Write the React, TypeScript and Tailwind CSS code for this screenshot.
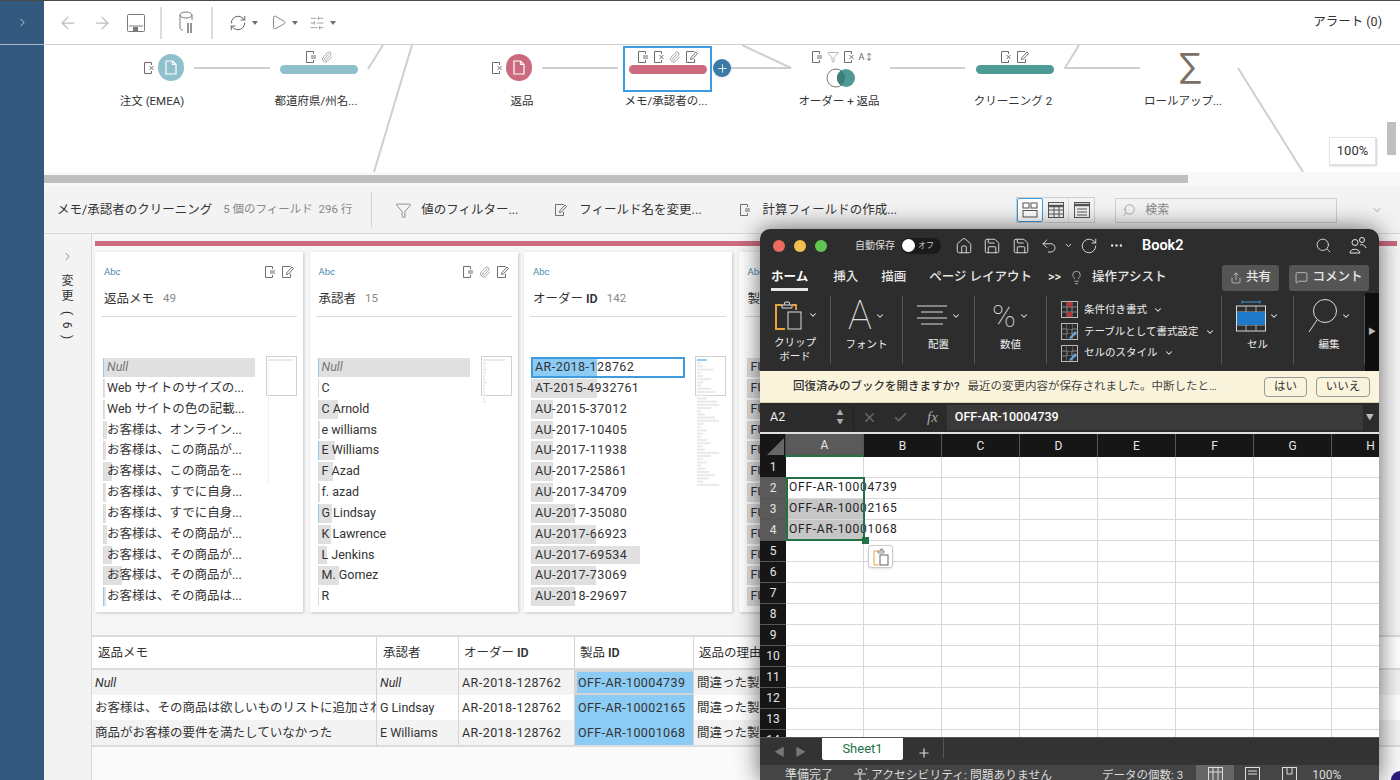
import React from "react";
import { ArrowLeft, ArrowRight, ChevronRight, ChevronDown, Search, House, Save, Undo2, RotateCw, Ellipsis, Lightbulb, Share, MessageSquare, X, Check, Plus, Play, RefreshCw, SlidersHorizontal, Funnel, Paperclip } from "lucide-react";

const S = "#6f6f6f";
function FileLines({ c = S }: { c?: string }) {
  return <svg width="12" height="14" viewBox="0 0 12 14" fill="none" stroke={c} strokeWidth="1"><path d="M8.5 4V1.5H1.5v11h7V10" /><path d="M6 6h5M6 8h5" /></svg>;
}
function FileX({ c = S }: { c?: string }) {
  return <svg width="12" height="14" viewBox="0 0 12 14" fill="none" stroke={c} strokeWidth="1"><path d="M8.5 4V1.5H1.5v11h7V10" /><path d="M6.5 5l4 4M10.5 5l-4 4" /></svg>;
}
function FileEdit({ c = S }: { c?: string }) {
  return <svg width="14" height="14" viewBox="0 0 14 14" fill="none" stroke={c} strokeWidth="1"><path d="M9.5 1.5h-8v11h8V9" /><path d="M5.5 9.5l.5-2 5-5.5 1.5 1.5L7.5 9z" /></svg>;
}
function Clip({ c = S }: { c?: string }) {
  return <Paperclip size={12} color={c} strokeWidth={1.2} />;
}
function Caret() {
  return <span className="mx-[5px] inline-block w-0 h-0 border-x-[3px] border-x-transparent border-t-[4px] border-t-[#707070]" />;
}
function ChevronMini({ w = "#e6e6e6" }: { w?: string }) {
  return <ChevronDown size={10} color={w} strokeWidth={2.5} />;
}

function Node({ x, children, top = 10, icons }: { x: number; children: React.ReactNode; top?: number; icons?: React.ReactNode }) {
  return (
    <div className="absolute top-0 w-[120px] h-[70px] flex flex-col items-center" style={{ left: x - 60 }}>
      <div className="absolute top-[5px] flex items-center gap-[4px] h-[14px]">{icons}</div>
      <div className="absolute left-0 right-0 flex justify-center" style={{ top }}>{children}</div>
    </div>
  );
}
function NodeLabel({ x, t }: { x: number; t: string }) {
  return <div className="absolute top-[48px] w-[120px] text-center text-[11.5px] leading-[16px] text-[#333] whitespace-nowrap" style={{ left: x - 60 }}>{t}</div>;
}
function Circle({ color }: { color: string }) {
  return (
    <div className="w-[26px] h-[27px] rounded-full flex items-center justify-center" style={{ background: color }}>
      <svg width="12" height="15" viewBox="0 0 12 15" fill="none" stroke="#fff" strokeWidth="1.2"><path d="M1 1h6.5L11 4.5V14H1z" /><path d="M7.5 1v3.5H11" /></svg>
    </div>
  );
}
function Pill({ color }: { color: string }) {
  return <div className="w-[78px] h-[9px] rounded-full" style={{ background: color }} />;
}

function Canvas() {
  return (
    <div className="relative h-[127px] bg-white overflow-hidden">
      <svg className="absolute inset-0" width="1356" height="127" fill="none" stroke="#cfcfcf" strokeWidth="2">
        <g transform="translate(-44 -45)">
          <path d="M194 68h76M368 69l15-24M412 45l-38 127M542 68h76M730 68h61L742 45M890 68h75M1079 45l-14 23h75M1238 68l65 104" />
        </g>
      </svg>
      <div className="absolute top-0 left-[-44px] w-[1444px] h-[127px]">
        <div className="absolute left-[143px] top-[16px]"><FileX /></div>
        <Node x={171} top={9}><Circle color="#8fc1cd" /></Node>
        <NodeLabel x={152} t="注文 (EMEA)" />
        <Node x={319} top={20} icons={<><FileLines /><Clip /></>}><Pill color="#8fc1cd" /></Node>
        <NodeLabel x={316} t="都道府県/州名..." />

        <div className="absolute left-[491px] top-[16px]"><FileX /></div>
        <Node x={519} top={9}><Circle color="#cc6a80" /></Node>
        <NodeLabel x={522} t="返品" />

        <div className="absolute left-[623px] top-[1px] w-[89px] h-[46px] border-2 border-[#3f9be0] bg-white" />
        <Node x={668} top={20} icons={<><FileLines /><FileX /><Clip /><FileEdit /></>}><Pill color="#cc6a80" /></Node>
        <NodeLabel x={666} t="メモ/承認者の..." />
        <div className="absolute left-[713px] top-[14px] w-[18px] h-[18px] rounded-full bg-[#3a7ba6] shadow flex items-center justify-center"><Plus size={13} color="#fff" strokeWidth={1.5} /></div>

        <Node x={842} top={23} icons={<><FileLines /><Funnel size={12} color={S} strokeWidth={1} /><FileX /><span className="text-[9px] leading-[12px] text-[#666]">A↕</span></>}>
          <svg width="30" height="20" viewBox="0 0 30 20" className="ml-[-3px]"><circle cx="10" cy="10" r="9" fill="#fff" stroke="#777" /><circle cx="20" cy="10" r="9" fill="#4e9a94" /><path d="M15 2.5a9 9 0 0 1 0 15a9 9 0 0 1 0-15z" fill="#3f7f7a" /></svg>
        </Node>
        <NodeLabel x={839} t="オーダー + 返品" />

        <Node x={1015} top={20} icons={<><FileX /><FileEdit /></>}><Pill color="#4e9a94" /></Node>
        <NodeLabel x={1013} t="クリーニング 2" />

        <div className="absolute left-[1179px] top-[3px] text-[37px] leading-[38px] font-normal text-[#7a7067]">∑</div>
        <NodeLabel x={1183} t="ロールアップ..." />
      </div>
      <div className="absolute right-[24px] top-[92px] w-[47px] h-[28px] bg-white border border-[#e4e4e4] shadow-[1px_1px_2px_rgba(0,0,0,.2)] flex items-center justify-center text-[13px] text-[#333]">100%</div>
      <div className="absolute right-[4px] top-[77px] w-[9px] h-[33px] bg-[#bfbfbf]" />
    </div>
  );
}

type Row = { t: string; b: number; a?: boolean; i?: boolean };
function ValueRow({ r, wide }: { r: Row; wide?: boolean }) {
  return (
    <div className="relative h-[20.85px] flex items-center shrink-0">
      <div className="absolute left-0 top-[1px] bottom-[1px] bg-[#e0e0e0]" style={{ width: r.b }} />
      <div className={"absolute left-0 top-[1px] bottom-[1px] w-[1px] " + (r.a ? "bg-[#8ccbf4]" : "bg-[#d8d8d8]")} />
      <span className={"relative pl-[4px] text-[12.5px] whitespace-nowrap " + (wide ? "tracking-[.45px] " : "") + (r.i ? "italic text-[#777]" : "text-[#333]")}>{r.t}</span>
    </div>
  );
}
function Overview({ bars, dash }: { bars: number[]; dash?: boolean }) {
  return (
    <div className="absolute right-[6px] top-[104px] w-[31px] h-[40px] border border-[#d0d0d0] bg-white/40">
      <svg width="31" height="130" className="absolute left-0 top-0 overflow-visible">
        {bars.map((b, i) => <rect key={i} x="1" y={2 + i * 3.2} width={b} height="2" fill={i === 0 && dash ? "#8ccbf4" : "#e9e9e9"} />)}
      </svg>
    </div>
  );
}
function Card({ name, bold, count, icons, rows, bars, sel, wide }: { name: string; bold?: string; count: string; icons?: React.ReactNode; rows: Row[]; bars: number[]; sel?: boolean; wide?: boolean }) {
  return (
    <div className="relative w-[208px] h-[360px] shrink-0 bg-white shadow-[1px_1px_3px_rgba(0,0,0,.2)] px-[6px]">
      <div className="flex items-center justify-between h-[40px] pl-[3px] pr-[2px]">
        <span className="text-[9.5px] text-[#4a8ab0]">Abc</span>
        <div className="flex items-center gap-[5px]">{icons}</div>
      </div>
      <div className="h-[14px] pl-[3px] flex items-center text-[12.5px] text-[#333] whitespace-nowrap">
        {name}{bold && <b className="ml-[3px] font-semibold">{bold}</b>}<span className="ml-[9px] text-[11.5px] text-[#888]">{count}</span>
      </div>
      <div className="h-[1px] mt-[10px] bg-[#dcdcdc]" />
      <div className={"mt-[40px] pr-[42px] flex flex-col " + (wide ? "pl-[1px]" : "pl-[2px]")}>
        {sel && (
          <div className="relative h-[20.85px] mr-[-1px] border-2 border-[#3f9be0] flex items-center shrink-0">
            <div className="absolute left-0 top-0 bottom-0 w-[64px] bg-[#8ccbf4]" />
            <span className="relative pl-[2px] text-[12.5px] tracking-[.45px] text-[#333]">AR-2018-128762</span>
          </div>
        )}
        {rows.map((r, i) => <ValueRow key={i} r={r} wide={wide} />)}
      </div>
      <Overview bars={bars} dash={sel} />
    </div>
  );
}

const c1: Row[] = [
  { t: "Null", b: 152, a: true, i: true }, { t: "Web サイトのサイズの...", b: 2 }, { t: "Web サイトの色の記載...", b: 2 },
  { t: "お客様は、オンライン...", b: 4 }, { t: "お客様は、この商品が...", b: 3 }, { t: "お客様は、この商品を...", b: 9 },
  { t: "お客様は、すでに自身...", b: 3 }, { t: "お客様は、すでに自身...", b: 3 }, { t: "お客様は、その商品が...", b: 4 },
  { t: "お客様は、その商品が...", b: 9 }, { t: "お客様は、その商品が...", b: 19 }, { t: "お客様は、その商品は...", b: 3, a: true },
];
const c2: Row[] = [
  { t: "Null", b: 152, a: true, i: true }, { t: "C", b: 1 }, { t: "C Arnold", b: 20 }, { t: "e williams", b: 2 },
  { t: "E Williams", b: 17, a: true }, { t: "F Azad", b: 15 }, { t: "f. azad", b: 2 }, { t: "G Lindsay", b: 14, a: true },
  { t: "K Lawrence", b: 13 }, { t: "L Jenkins", b: 9 }, { t: "M. Gomez", b: 21 }, { t: "R", b: 1 },
];
const c3: Row[] = [
  { t: "AT-2015-4932761", b: 66 }, { t: "AU-2015-37012", b: 22 }, { t: "AU-2017-10405", b: 22 }, { t: "AU-2017-11938", b: 22 },
  { t: "AU-2017-25861", b: 22 }, { t: "AU-2017-34709", b: 22 }, { t: "AU-2017-35080", b: 44 }, { t: "AU-2017-66923", b: 65 },
  { t: "AU-2017-69534", b: 109 }, { t: "AU-2017-73069", b: 65 }, { t: "AU-2018-29697", b: 44 },
];
const c4: Row[] = Array.from({ length: 12 }, () => ({ t: "FUR-BO-10000112", b: 30 }));
const b1 = [25, ...Array.from({ length: 38 }, () => 1)];
const b2 = [22, 3, 2, 4, 3, 2, 2, 4, 2, 2, 2, 3, 2, 3];
const b3 = [10, 4, 6, 16, 4, 6, 14, 6, 4, 14, 18, 8, 10, 20, 22, 14, 4, 8, 18, 22, 6, 4, 10, 6, 4, 10, 14, 6, 8, 22, 14, 6, 10, 4, 8, 12, 18, 12, 6, 22];

function Table() {
  const rows = [
    { a: "Null", ai: true, b: "Null", bi: true, p: "OFF-AR-10004739", bg: "bg-[#f3f3f3]" },
    { a: "お客様は、その商品は欲しいものリストに追加されていた", b: "G Lindsay", p: "OFF-AR-10002165", bg: "bg-white" },
    { a: "商品がお客様の要件を満たしていなかった", b: "E Williams", p: "OFF-AR-10001068", bg: "bg-[#f3f3f3]" },
  ];
  const cell = "h-full flex items-center px-[3px] overflow-hidden whitespace-nowrap border-r border-[#d4d4d4] shrink-0 pt-[1px]";
  return (
    <div className="border-t-2 border-[#dcdcdc] text-[12.5px] text-[#333]">
      <div className="flex h-[33px] bg-white border-b-2 border-[#dcdcdc]">
        <div className={cell + " w-[285px] pl-[6px]"}>返品メモ</div>
        <div className={cell + " w-[82px] pl-[6px]"}>承認者</div>
        <div className={cell + " w-[116px] pl-[5px]"}>オーダー<b className="ml-[3px] font-semibold">ID</b></div>
        <div className={cell + " w-[119px] pl-[5px]"}>製品<b className="ml-[3px] font-semibold">ID</b></div>
        <div className="h-full flex items-center px-[5px] pt-[1px] whitespace-nowrap">返品の理由</div>
      </div>
      {rows.map((r, i) => (
        <div key={i} className={"flex h-[25px] " + r.bg}>
          <div className={cell + " w-[285px] " + (r.ai ? "italic" : "")}>{r.a}</div>
          <div className={cell + " w-[82px] pl-[3px] " + (r.bi ? "italic" : "")}>{r.b}</div>
          <div className={cell + " w-[116px] pl-[3px] tracking-[.45px]"}>AR-2018-128762</div>
          <div className={cell + " w-[119px] bg-[#8ccbf4] pl-[3px] tracking-[.4px] " + (i === 0 ? "border-2 border-[#3f8fd8] !pl-[1px]" : "")}>{r.p}</div>
          <div className="h-full flex items-center px-[3px] pt-[1px] whitespace-nowrap">間違った製品</div>
        </div>
      ))}
      <div className="h-[2px] bg-[#dcdcdc]" />
    </div>
  );
}

function RibbonGroup({ w, label, icon, two }: { w: number; label: string; icon: React.ReactNode; two?: string }) {
  return (
    <div className="flex flex-col items-center h-[68px] border-r border-[#555] shrink-0" style={{ width: w }}>
      <div className="h-[36px] flex items-center gap-[3px] mt-[2px]">{icon}<ChevronMini /></div>
      <div className="text-[10.5px] leading-[14px] mt-[4px] text-[#eee] text-center">{label}{two && <><br />{two}</>}</div>
    </div>
  );
}
function StyleRow({ t, color, w }: { t: string; color: string; w?: number }) {
  return (
    <div className="flex items-center h-[22.5px] whitespace-nowrap text-[10.5px] text-[#eee]">
      <svg width="17" height="17" viewBox="0 0 17 17" fill="none" className="mr-[6px]">
        <rect x=".5" y=".5" width="16" height="16" stroke="#bbb" fill="#2b2b2b" />
        <path d="M.5 6h16M.5 11h16M6 .5v16M11 .5v16" stroke="#888" />
        <rect x="6" y="1" width="5" height="5" fill={color} />
        <rect x="6" y="11" width="5" height="5" fill={color} />
        <path d="M8 15l6-7 2 2-6 6z" fill={w ? "#6aa4d8" : "none"} />
      </svg>
      {t}<span className="ml-[6px]"><ChevronMini /></span>
    </div>
  );
}

function Excel() {
  const cols = ["A", "B", "C", "D", "E", "F", "G", "H"];
  const nums = Array.from({ length: 14 }, (_, i) => i + 1);
  return (
    <div className="absolute left-[760px] top-[228px] w-[619px] h-[552px] rounded-t-[10px] overflow-hidden bg-[#2d2d2d] flex flex-col shadow-[0_0_24px_rgba(0,0,0,.6)]">
      <div className="h-[33px] shrink-0 flex items-center pl-[13px] text-[#e6e6e6]">
        <span className="w-[12px] h-[12px] rounded-full bg-[#ed6a5e]" />
        <span className="ml-[9px] w-[12px] h-[12px] rounded-full bg-[#f4bf4f]" />
        <span className="ml-[9px] w-[12px] h-[12px] rounded-full bg-[#61c554]" />
        <span className="ml-[28px] text-[10px] text-[#ddd]">自動保存</span>
        <span className="ml-[6px] w-[40px] h-[16px] rounded-full bg-[#1a1a1a] flex items-center text-[8px] text-[#ccc]">
          <span className="w-[13px] h-[13px] ml-[1px] rounded-full bg-white mr-[3px]" />オフ
        </span>
        <House size={18} strokeWidth={1.2} className="ml-[14px]" />
        <Save size={18} strokeWidth={1.2} className="ml-[10px]" />
        <Save size={18} strokeWidth={1.2} className="ml-[11px]" />
        <Undo2 size={18} strokeWidth={1.2} className="ml-[10px]" />
        <ChevronDown size={9} strokeWidth={2.5} className="ml-[6px]" />
        <RotateCw size={18} strokeWidth={1.2} className="ml-[7px]" />
        <Ellipsis size={15} strokeWidth={1.8} className="ml-[11px]" />
        <b className="ml-[18px] text-[14.5px] font-semibold text-white">Book2</b>
        <Search size={17} strokeWidth={1.2} className="ml-auto" />
        <svg width="18" height="19" viewBox="0 0 18 19" fill="none" stroke="#e6e6e6" className="ml-[17px] mr-[12px]"><circle cx="6" cy="6.5" r="3" /><circle cx="13" cy="4" r="2.5" /><path d="M1 17c0-5 9-5 10 0zM11 9c2-1 5 0 6 3" /></svg>
      </div>
      <div className="h-[31px] shrink-0 flex items-center text-[12.5px] font-medium text-[#e6e6e6] whitespace-nowrap relative">
        <span className="ml-[11px] relative font-semibold text-white">ホーム<span className="absolute left-0 right-0 top-[20px] h-[2.5px] bg-[#e6e6e6]" /></span>
        <span className="ml-[25px]">挿入</span>
        <span className="ml-[23px]">描画</span>
        <span className="ml-[23px]">ページ レイアウト</span>
        <span className="ml-[16px]">&gt;&gt;</span>
        <Lightbulb size={15} strokeWidth={1} className="ml-[8px]" />
        <span className="ml-[8px]">操作アシスト</span>
        <span className="ml-auto w-[57px] h-[26px] rounded-[3px] bg-[#555] flex items-center justify-center gap-[4px]"><Share size={12} strokeWidth={1.2} />共有</span>
        <span className="ml-[10px] mr-[10px] w-[80px] h-[26px] rounded-[3px] bg-[#555] flex items-center justify-center gap-[4px]"><MessageSquare size={13} strokeWidth={1.2} />コメント</span>
      </div>
      <div className="h-[78px] shrink-0 flex items-start pt-[3px] relative">
        <RibbonGroup w={71} label="クリップ" two="ボード" icon={
          <svg width="32" height="32" viewBox="0 0 32 32" fill="none"><path d="M9 6H3v24h9" stroke="#e8a33a" strokeWidth="2" /><path d="M9 6h10v3H9zM11 6l1-3h4l1 3" stroke="#ddd" /><path d="M19 6h4v5" stroke="#e8a33a" strokeWidth="1.8" /><rect x="15" y="13" width="13" height="17" stroke="#ddd" /></svg>
        } />
        <RibbonGroup w={72} label="フォント" icon={<span className="text-[40px] leading-[38px] font-thin text-[#ddd]">A</span>} />
        <RibbonGroup w={72} label="配置" icon={<svg width="32" height="26" viewBox="0 0 32 26" stroke="#ddd"><path d="M1 3h30M5 9h22M1 15h30M5 21h22" /></svg>} />
        <RibbonGroup w={72} label="数値" icon={<span className="text-[32px] leading-[36px] font-thin text-[#ddd]">%</span>} />
        <div className="w-[175px] h-[68px] border-r border-[#555] pl-[14px] pt-[3px] shrink-0 flex flex-col">
          <StyleRow t="条件付き書式" color="#b03a3a" />
          <StyleRow t="テーブルとして書式設定" color="#2b2b2b" w={1} />
          <StyleRow t="セルのスタイル" color="#2b2b2b" w={1} />
        </div>
        <RibbonGroup w={72} label="セル" icon={<svg width="30" height="32" viewBox="0 0 30 32" fill="none"><path d="M6 2h18M6 .5v3M24 .5v3" stroke="#3f9be0" /><rect x=".5" y="6" width="29" height="25" stroke="#ddd" /><path d="M.5 12h29M.5 25h29M10 6v25M20 6v25" stroke="#aaa" /><rect x="1" y="12" width="28" height="13" fill="#1f78c8" /></svg>} />
        <RibbonGroup w={71} label="編集" icon={<svg width="30" height="36" viewBox="0 0 30 36" fill="none" stroke="#ddd"><circle cx="17" cy="13" r="11.5" /><path d="M9 22L1 34" /></svg>} />
        <div className="absolute right-0 top-0 bottom-0 w-[14px] bg-[#0e0e0e] flex items-center justify-center text-[8px] text-[#bbb]">▶</div>
      </div>
      <div className="h-[32px] shrink-0 bg-[#fbf4dc] flex items-center text-[11.5px] text-[#333] whitespace-nowrap border-b border-[#d8d0b4]">
        <span className="ml-[33px] font-medium">回復済みのブックを開きますか?</span>
        <span className="ml-[8px] text-[#444]">最近の変更内容が保存されました。中断したと…</span>
        <span className="ml-auto w-[43px] h-[20px] rounded-[4px] border border-[#999] flex items-center justify-center">はい</span>
        <span className="ml-[9px] mr-[9px] w-[54px] h-[20px] rounded-[4px] border border-[#999] flex items-center justify-center">いいえ</span>
      </div>
      <div className="h-[29px] shrink-0 flex items-center bg-[#2b2b2b] text-[#eee] text-[12.5px]">
        <span className="ml-[10px] w-[62px]">A2</span>
        <span className="w-[16px] flex flex-col items-center text-[7px] leading-[9px] text-[#aaa]"><span>▲</span><span>▼</span></span>
        <span className="w-[1px] h-[24px] bg-[#222] ml-[5px]" />
        <X size={15} color="#666" strokeWidth={2.5} className="ml-[8px]" />
        <Check size={15} color="#666" strokeWidth={2.5} className="ml-[16px]" />
        <span className="ml-[19px] italic text-[15px] text-[#aaa] [font-family:'Liberation_Serif',serif]">fx</span>
        <span className="ml-[9px] w-[416px] h-[25px] bg-[#3a3a3a] flex items-center pl-[8px] font-medium text-white">OFF-AR-10004739</span>
        <span className="ml-[3px] text-[8px] text-[#bbb]">▼</span>
      </div>
      <div className="h-[2px] shrink-0 bg-[#e0e0e0]" />
      <div className="h-[23px] shrink-0 flex bg-[#161616] text-[12px] text-[#e6e6e6] overflow-hidden">
        <div className="w-[26px] shrink-0 relative border-r border-[#444]">
          <svg width="26" height="23" className="absolute inset-0"><path d="M7 21L24 4v17z" fill="#666" /></svg>
        </div>
        {cols.map((c, i) => (
          <div key={c} className={"w-[78px] shrink-0 flex items-center justify-center border-r border-[#555] " + (i === 0 ? "bg-[#5a5a5a] border-b-2 border-b-[#217346]" : "")}>{c}</div>
        ))}
      </div>
      <div className="relative flex-1 min-h-0 flex overflow-hidden bg-white">
        <div className="w-[26px] shrink-0 bg-[#161616] text-[12px] text-[#e6e6e6]">
          {nums.map(n => (
            <div key={n} className={"h-[21px] flex items-center justify-center border-b border-[#555] " + (n >= 2 && n <= 4 ? "bg-[#5a5a5a]" : "")}>{n}</div>
          ))}
        </div>
        <div className="flex-1 overflow-hidden">
          {nums.map(n => (
            <div key={n} className="flex h-[21px] w-[640px]">
              {cols.map(c => (
                <div key={c} className={"w-[78px] shrink-0 border-r border-b border-[#d8d8d8] " + (c === "A" && (n === 3 || n === 4) ? "bg-[#c6c6c6]" : "")} />
              ))}
            </div>
          ))}
        </div>
        {["OFF-AR-10004739", "OFF-AR-10002165", "OFF-AR-10001068"].map((t, i) => (
          <div key={t} className="absolute left-[29px] text-[12px] leading-[21px] tracking-[.75px] text-[#222]" style={{ top: 20 + i * 21 }}>{t}</div>
        ))}
        <div className="absolute left-[26px] top-[20px] w-[79px] h-[64px] border-2 border-[#217346]" />
        <div className="absolute left-[102px] top-[80px] w-[7px] h-[7px] bg-[#217346]" />
        <div className="absolute left-[108px] top-[88px] w-[25px] h-[23px] rounded-[3px] bg-white border border-[#ccc] shadow-sm flex items-center justify-center">
          <svg width="16" height="18" viewBox="0 0 16 18" fill="none"><path d="M5 3H1v14h5" stroke="#e8a33a" /><path d="M5 3h6v2H5zM7 3l.5-2h2L10 3" stroke="#888" /><rect x="7" y="7" width="8" height="10" stroke="#666" /></svg>
        </div>
      </div>
      <div className="h-[28px] shrink-0 flex items-start bg-[#333] text-[#777] border-t border-[#555]">
        <span className="ml-[14px] mt-[7px] text-[11px]">◀</span>
        <span className="ml-[10px] mt-[7px] text-[11px]">▶</span>
        <span className="ml-[16px] w-[81px] h-[22px] bg-white rounded-b-[2px] flex items-center justify-center text-[13px] text-[#217346]">Sheet1</span>
        <Plus size={14} color="#ddd" strokeWidth={2} className="ml-[14px] mt-[8px]" />
        <span className="ml-[12px] w-[1px] h-[20px] bg-[#555]" />
      </div>
      <div className="h-[16px] shrink-0 flex items-start bg-[#454545] text-[12px] leading-[16px] text-[#ddd] whitespace-nowrap overflow-hidden">
        <span className="ml-[25px] mt-[2px]">準備完了</span>
        <svg width="17" height="16" viewBox="0 0 17 16" fill="none" stroke="#ddd" className="ml-[20px] mt-[2px]"><circle cx="7" cy="4" r="2" /><path d="M1 7h12M7 7v4l-3 5M7 11l3 5M13 1l1 2M15 12l1 2" /></svg>
        <span className="ml-[1px] mt-[2px] text-[11.8px]">アクセシビリティ: 問題ありません</span>
        <span className="ml-[50px] mt-[2px] text-[11.5px]">データの個数: 3</span>
        <span className="ml-[13px] w-[38px] h-[16px] bg-[#666] flex items-center justify-center">
          <svg width="15" height="16" viewBox="0 0 15 16" fill="none" stroke="#ddd"><rect x=".5" y="2.5" width="14" height="14" /><path d="M.5 7h14M5 2v14M10 2v14" /></svg>
        </span>
        <svg width="15" height="16" viewBox="0 0 15 16" fill="none" stroke="#ddd" className="ml-[11px]"><rect x=".5" y="2.5" width="14" height="14" /><path d="M3 6h9M3 9h9" /></svg>
        <svg width="15" height="16" viewBox="0 0 15 16" fill="none" stroke="#ddd" className="ml-[22px]"><rect x=".5" y="2.5" width="14" height="14" /><path d="M5 2v7h5V2" /></svg>
        <span className="ml-[15px] mt-[2px]">100%</span>
      </div>
    </div>
  );
}

export default function App() {
  const smallIcons = <><FileLines /><FileEdit /></>;
  return (
    <div className="relative w-[1400px] h-[780px] overflow-hidden flex border-t border-[#4a4a4a] [font-family:Roboto,'Noto_Sans_CJK_JP',sans-serif]">
      <aside className="w-[44px] shrink-0 bg-[#34597e]">
        <div className="h-[44px] border-b border-[#a9b7c6] flex items-center justify-center"><ChevronRight size={13} color="#dfe7ef" strokeWidth={1.5} /></div>
      </aside>
      <main className="flex-1 min-w-0 flex flex-col">
        <div className="h-[44px] shrink-0 bg-white border-b border-[#cfcfcf] flex items-center pl-[14px] text-[#bdbdbd]">
          <ArrowLeft size={20} strokeWidth={1.5} />
          <ArrowRight size={20} strokeWidth={1.5} className="ml-[14px]" />
          <svg width="18" height="20" viewBox="0 0 18 20" fill="none" stroke="#7a7a7a" className="ml-[15px]"><rect x=".5" y="1.5" width="17" height="17" rx="1" /><path d="M2 13h14" /><rect x="6" y="14" width="5" height="4" fill="#7a7a7a" stroke="none" /></svg>
          <span className="ml-[15px] w-[2px] h-[32px] bg-[#dcdcdc]" />
          <svg width="14" height="24" viewBox="0 0 14 24" fill="none" stroke="#7a7a7a" className="ml-[17px]"><ellipse cx="7" cy="4" rx="6" ry="3" /><path d="M1 4v13c0 1 1 2 3 2M13 4v5" /><path d="M9 12v10M12 12v10" strokeWidth="1.6" /></svg>
          <span className="ml-[18px] w-[2px] h-[32px] bg-[#dcdcdc]" />
          <RefreshCw size={18} strokeWidth={1.2} color="#555" className="ml-[16px]" />
          <Caret />
          <Play size={17} strokeWidth={1} color="#555" className="ml-[7px]" />
          <Caret />
          <SlidersHorizontal size={16} strokeWidth={1} color="#777" className="ml-[6px]" />
          <Caret />
          <span className="ml-auto mr-[18px] text-[12.5px] text-[#333]">アラート (0)</span>
        </div>
        <Canvas />
        <div className="h-[13px] shrink-0 bg-[#f8f8f8] pt-[3px]"><div className="w-[1144px] h-[8px] bg-[#bfbfbf]" /></div>
        <div className="h-[49px] shrink-0 bg-[#f3f3f3] border-b border-[#d8d8d8] flex items-center pt-[2px] text-[12.5px] text-[#333] whitespace-nowrap">
          <span className="ml-[13px]">メモ/承認者のクリーニング</span>
          <span className="ml-[11px] text-[11.5px] text-[#888]">5 個のフィールド&nbsp;&nbsp;296 行</span>
          <span className="ml-[19px] w-[1px] h-[36px] bg-[#d4d4d4]" />
          <Funnel size={17} strokeWidth={1} color="#666" className="ml-[23px]" />
          <span className="ml-[9px]">値のフィルター...</span>
          <span className="ml-[36px]"><FileEdit /></span>
          <span className="ml-[11px]">フィールド名を変更...</span>
          <span className="ml-[37px]"><FileLines /></span>
          <span className="ml-[12px]">計算フィールドの作成...</span>
          <div className="ml-[119px] w-[79px] h-[26px] border border-[#cfcfcf] flex">
            <span className="w-[26px] h-full border border-[#3f9be0] rounded-[2px] bg-white flex items-center justify-center">
              <svg width="16" height="16" viewBox="0 0 16 16" fill="none" stroke="#555"><rect x="1" y="1" width="6" height="5" /><rect x="9" y="1" width="6" height="5" /><rect x="1" y="8.5" width="14" height="6.5" /></svg>
            </span>
            <span className="w-[26px] flex items-center justify-center border-r border-[#ddd]">
              <svg width="16" height="16" viewBox="0 0 16 16" fill="none" stroke="#555"><rect x=".5" y=".5" width="15" height="15" /><path d="M.5 4h15" strokeWidth="2.5" /><path d="M.5 8h15M.5 12h15M6 4v11M11 4v11" /></svg>
            </span>
            <span className="w-[25px] flex items-center justify-center">
              <svg width="16" height="16" viewBox="0 0 16 16" fill="none" stroke="#555"><rect x=".5" y=".5" width="15" height="15" /><path d="M.5 3h15" strokeWidth="2.5" /><path d="M3 7h10M3 10h10M3 13h10" /></svg>
            </span>
          </div>
          <div className="ml-[20px] w-[222px] h-[25px] border border-[#cfcfcf] flex items-center text-[#888]">
            <Search size={14} strokeWidth={1.2} className="ml-[6px] -scale-x-100" />
            <span className="ml-[9px] text-[12px]">検索</span>
          </div>
          <ChevronDown size={12} strokeWidth={1.2} color="#777" className="ml-[34px]" />
        </div>
        <div className="flex-1 min-h-0 flex">
          <div className="w-[48px] shrink-0 bg-[#f3f3f3] border-r border-[#d8d8d8] flex flex-col items-center text-[12px] text-[#333]">
            <ChevronRight size={13} strokeWidth={1.2} color="#555" className="mt-[16px]" />
            <span className="mt-[11px] leading-[15px]">変</span>
            <span className="leading-[15px]">更</span>
            <span className="mt-[3px] leading-[12px] rotate-90">(</span>
            <span className="leading-[12px] rotate-90">6</span>
            <span className="leading-[12px] rotate-90">)</span>
          </div>
          <div className="flex-1 min-w-0 bg-[#f6f6f6] flex flex-col overflow-hidden">
            <div className="h-[5px] shrink-0 mt-[7px] ml-[3px] mr-[3px] bg-[#cc6a80]" />
            <div className="flex gap-[6.5px] ml-[3px] mt-[6px] h-[360px] shrink-0">
              <Card name="返品メモ" count="49" icons={smallIcons} rows={c1} bars={b1} />
              <Card name="承認者" count="15" icons={<><FileLines /><Clip /><FileEdit /></>} rows={c2} bars={b2} />
              <Card name="オーダー" bold="ID" count="142" rows={c3} bars={b3} sel wide />
              <Card name="製品" bold="ID" count="80" rows={c4} bars={b3} />
            </div>
            <div className="mt-[23px] shrink-0"><Table /></div>
            <div className="flex-1 bg-[#fafafa]" />
          </div>
        </div>
      </main>
      <Excel />
      <div className="absolute right-0 bottom-0 w-[9px] h-[9px] bg-[#2a1a7a] rounded-tl-full" />
    </div>
  );
}
